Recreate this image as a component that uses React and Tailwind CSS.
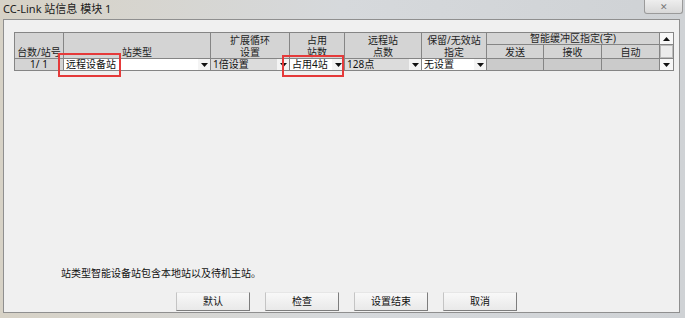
import React from 'react'

const FONT = { fontFamily: '"Noto Sans", "Noto Sans CJK SC", sans-serif' }

function Arrow({ up }) {
  return (
    <svg width="7" height="4" viewBox="0 0 7 4" className="block">
      <polygon points={up ? '0,4 7,4 3.5,0' : '0,0 7,0 3.5,4'} fill="#111" />
    </svg>
  )
}

function Combo({ text, white }) {
  return (
    <div className={`flex items-center ${white ? 'bg-white' : 'bg-[#dcdcdc]'}`}>
      <span className="flex-1 pl-[2px] whitespace-nowrap leading-[11px]">{text}</span>
      <div className="w-[12px] h-full flex items-center justify-center bg-[#f4f4f4]">
        <Arrow />
      </div>
    </div>
  )
}

const heads = [
  ['台数/站号'],
  ['站类型'],
  ['扩展循环', '设置'],
  ['占用', '站数'],
  ['远程站', '点数'],
  ['保留/无效站', '指定'],
]

const buttons = ['默认', '检查', '设置结束', '取消']

export default function App() {
  return (
    <div
      className="relative w-[685px] h-[318px] flex flex-col bg-gradient-to-r from-[#d7d2c6] via-[#d6d9dc] to-[#cfd2d5] text-[#111] overflow-hidden"
      style={FONT}
    >
      {/* title bar */}
      <div className="h-[19px] flex items-start shrink-0">
        <span className="pl-[3px] pt-[2px] text-[11px] leading-[14px] text-[#1b1b1b]">CC-Link 站信息 模块 1</span>
        <div className="ml-auto mr-[2px] w-[39px] h-[14px] border border-[#9a9a9a] border-t-0 rounded-b-[3px] bg-gradient-to-b from-[#eeeeee] to-[#d8d8d8] flex items-center justify-center text-[9px] leading-none text-[#777]">
          ✕
        </div>
      </div>

      {/* dialog body */}
      <div className="flex-1 ml-[3px] mr-[5px] mb-[5px] border border-[#8f8f8f] bg-[#f0f0f0] flex flex-col pt-[12px] pl-[10px] text-[10px] leading-[11px]">
        <div className="w-fit grid grid-cols-[48px_146px_78px_54px_76px_64px_56px_57px_57px_13px] grid-rows-[11px_13px_11px] gap-px bg-[#858585] border border-[#858585]">
          {heads.map((h, i) => (
            <div key={i} className="row-span-2 bg-[#d4d4d4] flex flex-col justify-end items-center text-[#222]">
              {h.map((l) => (
                <span key={l} className="whitespace-nowrap leading-[12px]">{l}</span>
              ))}
            </div>
          ))}
          <div className="col-span-3 bg-[#d4d4d4] flex items-center justify-center whitespace-nowrap text-[#222]">智能缓冲区指定(字)</div>
          <div className="bg-[#f7f7f7] flex items-center justify-center"><Arrow up /></div>
          {['发送', '接收', '自动'].map((t) => (
            <div key={t} className="bg-[#d4d4d4] flex items-end justify-center text-[#222] leading-[12px]">{t}</div>
          ))}
          <div className="bg-[#ececec] border border-[#bdbdbd]" />

          {/* data row */}
          <div className="bg-[#d4d4d4] flex items-center justify-center">1/ 1</div>
          <Combo text="远程设备站" white />
          <Combo text="1倍设置" />
          <Combo text="占用4站" white />
          <Combo text="128点" />
          <Combo text="无设置" white />
          <div className="bg-[#cbcbcb]" />
          <div className="bg-[#cbcbcb]" />
          <div className="bg-[#cbcbcb]" />
          <div className="bg-[#f7f7f7] flex items-center justify-center"><Arrow /></div>
        </div>

        <div className="flex-1" />

        <p className="pl-[47px] h-[12px] leading-[12px] mb-[13px]">站类型智能设备站包含本地站以及待机主站。</p>

        <div className="flex gap-[15px] pl-[162px] mb-[1px]">
          {buttons.map((b) => (
            <button
              key={b}
              className="w-[74px] h-[19px] text-[10px] border border-t-[#e6e6e6] border-l-[#c4c4c4] border-r-[#7d7d7d] border-b-[#7d7d7d] bg-gradient-to-b from-[#f8f8f8] to-[#e9e9e9]"
            >
              {b}
            </button>
          ))}
        </div>
      </div>

      {/* red annotation boxes */}
      <div className="absolute left-[58px] top-[53px] w-[63px] h-[24px] border-2 border-[#e53a3a]" />
      <div className="absolute left-[282px] top-[55px] w-[62px] h-[22px] border-2 border-[#e53a3a]" />
    </div>
  )
}
